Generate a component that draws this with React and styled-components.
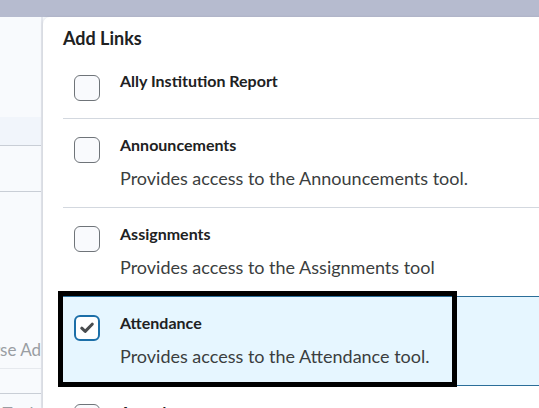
import React from "react";
import styled, { createGlobalStyle } from "styled-components";

const GlobalStyle = createGlobalStyle`
  html, body {
    margin: 0;
    padding: 0;
    overflow: hidden;
  }
  body {
    font-family: Lato, "Noto Sans", "Liberation Sans", sans-serif;
  }
`;

const links = [
  { id: "ally", title: "Ally Institution Report" },
  {
    id: "announcements",
    title: "Announcements",
    desc: "Provides access to the Announcements tool.",
  },
  {
    id: "assignments",
    title: "Assignments",
    desc: "Provides access to the Assignments tool",
  },
  {
    id: "attendance",
    title: "Attendance",
    desc: "Provides access to the Attendance tool.",
    checked: true,
    focused: true,
  },
  {
    id: "awards",
    title: "Awards",
    desc: "Provides access to the Awards tool.",
  },
];

const CheckMark = () => (
  <svg width="14" height="12" viewBox="0 0 14 12">
    <path
      d="M1.8 6.2 L5.2 9.4 L12.2 2.2"
      fill="none"
      stroke="#494c4e"
      strokeWidth="3"
      strokeLinecap="round"
      strokeLinejoin="round"
    />
  </svg>
);

const App = () => {
  return (
    <>
      <GlobalStyle />
      <Page>
        <TopBar />
        <Main>
          <SidePane>
            <SideBlock $h={100} />
            <SideBlock $h={28} $bg="#f1f5fb" $line />
            <SideBlock $h={45} $line />
            <SideBlock $h={138} />
            <SideField>Course Ad</SideField>
            <SideBlock $h={24} $line />
            <SideField>Tools</SideField>
          </SidePane>

          <Dialog>
            <DialogTitle>Add Links</DialogTitle>
            {links.map((link) => (
              <LinkRow key={link.id} $selected={link.checked}>
                <Checkbox $checked={link.checked}>
                  {link.checked && <CheckMark />}
                </Checkbox>
                <LinkText>
                  <LinkTitle $solo={!link.desc}>{link.title}</LinkTitle>
                  {link.desc && <LinkDesc>{link.desc}</LinkDesc>}
                </LinkText>
                {link.focused && <FocusRing />}
              </LinkRow>
            ))}
          </Dialog>
        </Main>
      </Page>
    </>
  );
};

export default App;

const Page = styled.div`
  width: 539px;
  height: 408px;
  overflow: hidden;
  background: #f7f9fd;
  display: flex;
  flex-direction: column;
`;

const TopBar = styled.div`
  height: 17px;
  flex-shrink: 0;
  background: #b6bbcf;
`;

const Main = styled.div`
  display: flex;
  flex: 1;
  min-height: 0;
`;

const SidePane = styled.div`
  width: 41px;
  flex-shrink: 0;
  display: flex;
  flex-direction: column;
  overflow: hidden;
  border-right: 2px solid #e4e7ee;
`;

const SideBlock = styled.div`
  height: ${(p) => p.$h}px;
  flex-shrink: 0;
  background: ${(p) => p.$bg || "#f8fafd"};
  border-bottom: ${(p) => (p.$line ? "1px solid #c9ced6" : "none")};
`;

const SideField = styled.div`
  height: 38px;
  flex-shrink: 0;
  display: flex;
  align-items: center;
  justify-content: flex-end;
  white-space: nowrap;
  font-size: 17px;
  color: #9a9ea3;
  background: #f8fafd;
  border-bottom: 1px solid #e6e9ee;
`;

const Dialog = styled.div`
  width: 520px;
  flex-shrink: 0;
  background: #ffffff;
  border-top-left-radius: 7px;
  padding: 9px 0 0 20px;
  box-shadow: -1px 0 3px rgba(0, 0, 0, 0.08);
`;

const DialogTitle = styled.h2`
  margin: 0 0 7px 0;
  font-size: 18px;
  line-height: 24px;
  font-weight: 700;
  color: #202122;
`;

const LinkRow = styled.div`
  position: relative;
  display: flex;
  align-items: flex-start;
  gap: 20px;
  padding: 16px 0 17px 11px;
  background: ${(p) => (p.$selected ? "#e6f6ff" : "transparent")};
  border-top: ${(p) => (p.$selected ? "1px solid #2b6e99" : "none")};
  border-bottom: 1px solid ${(p) => (p.$selected ? "#2b6e99" : "#d3d8df")};
  margin-top: ${(p) => (p.$selected ? "-1px" : "0")};
`;

const Checkbox = styled.div`
  width: 26px;
  height: 26px;
  box-sizing: border-box;
  margin-top: 2px;
  flex-shrink: 0;
  display: flex;
  align-items: center;
  justify-content: center;
  border-radius: 6px;
  border: ${(p) => (p.$checked ? "2px solid #1c6fa8" : "1px solid #6f7479")};
  background: ${(p) => (p.$checked ? "#ffffff" : "#f9fafd")};
`;

const LinkText = styled.div`
  display: flex;
  flex-direction: column;
`;

const LinkTitle = styled.div`
  font-size: 16px;
  line-height: 20px;
  font-weight: 700;
  color: #202122;
  margin-top: ${(p) => (p.$solo ? "-2px" : "0")};
`;

const LinkDesc = styled.div`
  margin-top: 11px;
  font-size: 18px;
  line-height: 24px;
  color: #3b3e40;
`;

const FocusRing = styled.div`
  position: absolute;
  left: -5px;
  top: -6px;
  width: 399px;
  height: 96px;
  box-sizing: border-box;
  border: 5px solid #000000;
  pointer-events: none;
`;
